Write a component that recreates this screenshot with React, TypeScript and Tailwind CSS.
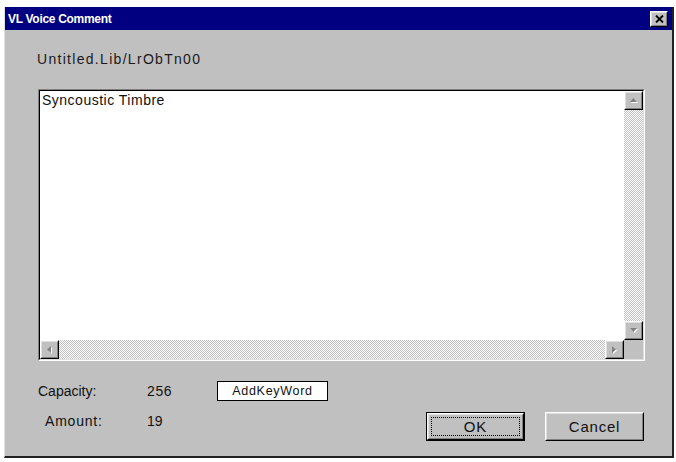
import React from "react";

const font = { fontFamily: '"Liberation Sans", Arial, sans-serif' };

function Raised({ className, children }: { className?: string; children?: React.ReactNode }) {
  return (
    <div className={"border border-t-white border-l-white border-r-black border-b-black bg-[#c0c0c0] " + (className ?? "")}>
      <div className="w-full h-full border border-t-[#dfdfdf] border-l-[#dfdfdf] border-r-[#808080] border-b-[#808080] flex items-center justify-center">
        {children}
      </div>
    </div>
  );
}

function Arrow({ dir }: { dir: "up" | "down" | "left" | "right" }) {
  const pts: Record<string, string> = {
    up: "1,6 8,6 4.5,2",
    down: "1,2 8,2 4.5,6",
    left: "6,1 6,8 2,4.5",
    right: "2,1 2,8 6,4.5",
  };
  return (
    <svg width="9" height="9" viewBox="0 0 9 9">
      <polygon points={pts[dir]} fill="#ffffff" transform="translate(1,1)" />
      <polygon points={pts[dir]} fill="#808080" />
    </svg>
  );
}

const track = "bg-[repeating-conic-gradient(#c0c0c0_0%_25%,#ffffff_0%_50%)] bg-[length:2px_2px]";

export default function App() {
  return (
    <div className="w-[676px] h-[462px] bg-white pl-[4px] pt-[7px] overflow-hidden" style={font}>
      <div className="w-[670px] h-[451px] bg-[#c0c0c0] border-l border-l-[#dfdfdf] border-r-2 border-r-[#202020] border-b-2 border-b-[#202020] flex flex-col">
        <div className="h-[23px] bg-[#000080] flex items-center justify-between pl-[3px] pr-[4px]">
          <span className="text-white font-bold text-[12px] tracking-[-0.3px]">VL Voice Comment</span>
          <Raised className="w-[18px] h-[16px]">
            <svg width="9" height="8" viewBox="0 0 9 8">
              <path d="M1 0.5 L8 7.5 M8 0.5 L1 7.5" stroke="#000" strokeWidth="1.8" />
            </svg>
          </Raised>
        </div>

        <div className="pl-[32px] pr-[26px]">
          <div className="mt-[21px] text-[14px] leading-[16px] tracking-[1.3px] text-[#1a1a1a]">Untitled.Lib/LrObTn00</div>

          <div className="mt-[22px] ml-[1px] w-[607px] h-[272px] border border-t-[#808080] border-l-[#808080] border-r-white border-b-white">
            <div className="w-full h-full border border-t-black border-l-black border-r-[#dfdfdf] border-b-[#dfdfdf] bg-white grid grid-cols-[1fr_19px] grid-rows-[1fr_19px]">
              <div className="pl-[2px] pt-[1px] text-[14px] leading-[16px] tracking-[0.5px] text-[#111]">Syncoustic Timbre</div>
              <div className="flex flex-col">
                <Raised className="w-[19px] h-[19px]">
                  <Arrow dir="up" />
                </Raised>
                <div className={"flex-1 " + track} />
                <Raised className="w-[19px] h-[19px]">
                  <Arrow dir="down" />
                </Raised>
              </div>
              <div className="flex">
                <Raised className="w-[19px] h-[19px]">
                  <Arrow dir="left" />
                </Raised>
                <div className={"flex-1 " + track} />
                <Raised className="w-[19px] h-[19px]">
                  <Arrow dir="right" />
                </Raised>
              </div>
              <div className="bg-[#c0c0c0]" />
            </div>
          </div>

          <div className="mt-[20px] ml-[1px] flex items-center h-[20px] text-[14px] leading-[16px] text-[#111]">
            <span className="w-[109px]">Capacity:</span>
            <span className="w-[70px] tracking-[0.6px]">256</span>
            <div className="w-[111px] h-[20px] bg-white border border-black flex items-center justify-center text-[12.5px] tracking-[0.7px]">
              AddKeyWord
            </div>
          </div>

          <div className="mt-[11px] ml-[1px] flex items-start text-[14px] leading-[16px] text-[#111]">
            <span className="w-[109px] pl-[7px] mt-[1px] tracking-[0.8px]">Amount:</span>
            <span className="w-[279px] mt-[1px]">19</span>
            <div className="w-[99px] h-[29px] border border-black">
              <Raised className="w-full h-full">
                <div className="w-[89px] h-[19px] border border-dotted border-black flex items-center justify-center text-[15px] tracking-[0.8px] text-[#111]">
                  OK
                </div>
              </Raised>
            </div>
            <Raised className="ml-[20px] w-[99px] h-[29px]">
              <span className="text-[15px] tracking-[0.8px] text-[#111]">Cancel</span>
            </Raised>
          </div>
        </div>
      </div>
    </div>
  );
}
